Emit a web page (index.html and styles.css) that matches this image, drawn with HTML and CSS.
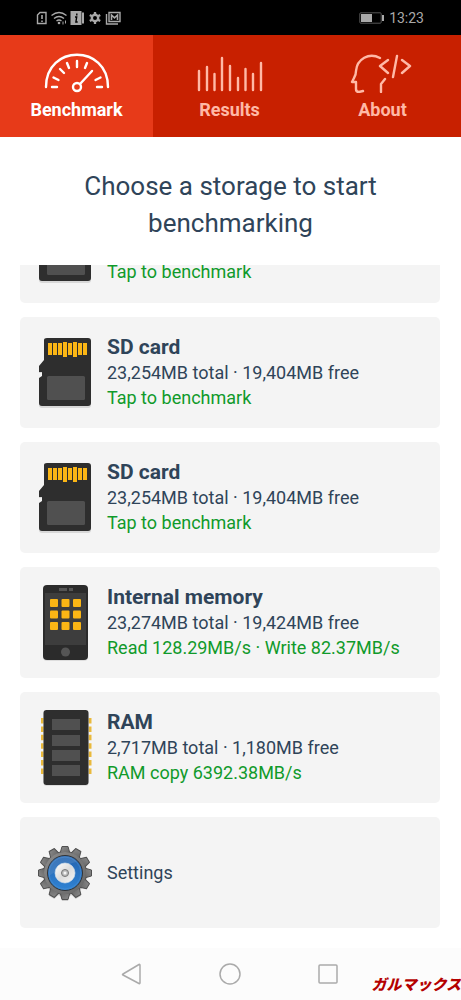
FILE: index.html
```html
<!DOCTYPE html>
<html lang="en">
<head>
<meta charset="utf-8">
<meta name="viewport" content="width=device-width, initial-scale=1">
<title>Storage benchmark</title>
<link rel="stylesheet" href="styles.css">
</head>
<body>
<svg width="0" height="0" class="defs" aria-hidden="true">
  <defs>
    <linearGradient id="metal" x1="0" y1="0" x2="1" y2="1"><stop offset="0" stop-color="#8c8c8c"/><stop offset="1" stop-color="#666"/></linearGradient>
    <linearGradient id="blue" x1="0" y1="0" x2="0" y2="1"><stop offset="0" stop-color="#2563ae"/><stop offset="1" stop-color="#2f83d4"/></linearGradient>
    <linearGradient id="silver" x1="0" y1="0" x2="1" y2="1"><stop offset="0" stop-color="#fff"/><stop offset=".5" stop-color="#dcdcdc"/><stop offset="1" stop-color="#f5f5f5"/></linearGradient>
    <path id="tooth" d="M-4.800 -20L-3 -26.500H3L4.800 -20Z"/>
    <symbol id="sd" viewBox="0 0 54 72">
      <path d="M9 1H50Q53 1 53 4V67Q53 70 50 70H4Q1 70 1 67V42L4 39V35H1V29L7 23V4Q7 1 9 1Z" fill="#d8d8d8" transform="translate(0 1)"/>
      <path d="M9 1H50Q53 1 53 4V66Q53 69 50 69H4Q1 69 1 66V41L4 39V35H1V29L6 23V3Q6 1 9 1Z" fill="#2e2e2e"/>
      <path d="M10 6h4v12h-4zM15 6h4v12h-4zM20 6h4v12h-4zM25 5h4v15h-4zM30 6h4v12h-4zM35 5h4v15h-4zM40 6h4v12h-4zM45 6h4v12h-4z" fill="#fbb615"/>
      <rect x="9" y="39" width="38" height="24" rx="1.500" fill="#505050"/>
    </symbol>
  </defs>
</svg>
<div class="app">
  <header class="status">
    <div class="status-icons">
      <svg width="86" height="16" viewBox="0 0 86 16" fill="none" stroke="#a9a9a9" stroke-width="1.400" aria-hidden="true">
        <path d="M4 2.500H10V13.500H1.500V5Z"/><path d="M6 5v4M6 10.500v1.500" stroke-width="1.600"/>
        <path d="M15.500 5.500Q23 -.5 30.500 5.500M18 8.500Q23 4.500 28 8.500M20.500 11Q23 9 25.500 11"/><circle cx="23" cy="13" r="1.300" fill="#a9a9a9" stroke="none"/><path d="M27 11.500v3M29.500 10.500v3" stroke-width="1"/>
        <path d="M34.500 1h11v14h-11zM46 2.500h2v11h-2z" fill="#a9a9a9" stroke="none"/><path d="M40.800 3.500v2M39 7h1.700l-.8 5h1.800" stroke="#000"/>
        <circle cx="59" cy="8" r="3.200" stroke-width="2.400"/><path d="M59 2v2.500M59 11.500V14M53.800 5l2.200 1.300M62 9.700l2.200 1.300M53.800 11l2.200-1.300M62 6.300L64.200 5" stroke-width="2.300"/>
        <path d="M73 2.500H84V11.500H73ZM70.500 4V14H82"/><path d="M75.500 10V5l3 2.800 3-2.800v5" stroke-width="1.600"/>
      </svg>
    </div>
    <div class="status-right">
      <svg width="26" height="12" viewBox="0 0 26 12" aria-hidden="true"><rect x=".8" y=".8" width="21.400" height="10.400" rx="1" fill="none" stroke="#555"/><path d="M2 2h11v8H2zM23 3h2v6h-2z" fill="#aaa"/></svg>
      <time>13:23</time>
    </div>
  </header>
  <nav class="tabs">
    <button class="tab tab-active" type="button">
      <svg class="tab-icon" viewBox="0 0 66 40" aria-hidden="true"><path d="M2 34C2 -9 64 -9 64 34M8 34h5M53 34h5M9.500 24.500l5 2.500M16 16l4 4M23 10l2 5M33 8v6M43 10l-2 5M56.500 24.500l-5 2.500M36 31L48 18"/><circle cx="33" cy="34" r="4"/></svg>
      Benchmark
    </button>
    <button class="tab" type="button">
      <svg class="tab-icon" viewBox="0 0 66 40" aria-hidden="true"><path d="M2 18V37M10 14V37M17.500 21V37M25 5V37M33 13V37M41 25V37M48.500 16V37M56 21V37M64 10V37"/></svg>
      Results
    </button>
    <button class="tab" type="button">
      <svg class="tab-icon" viewBox="0 0 66 40" aria-hidden="true"><path d="M30 5C19 -1 7 6 6 18Q6 22 4 25L2 29H6V36Q6 39 9 39L13 38M35 26L31 31V39M38 7L30 13L38 20M47 3L43 24M52 7L60 13L52 20"/></svg>
      About
    </button>
  </nav>
  <h1 class="title">Choose a storage to start benchmarking</h1>
  <main class="list">
    <button class="card card-clipped" type="button">
      <svg class="card-icon" viewBox="0 0 54 72" aria-hidden="true"><use href="#sd"/></svg>
      <span class="info"><span class="result">Tap to benchmark</span></span>
    </button>
    <button class="card" type="button">
      <svg class="card-icon" viewBox="0 0 54 72" aria-hidden="true"><use href="#sd"/></svg>
      <span class="info"><strong class="name">SD card</strong><span>23,254MB total · 19,404MB free</span><span class="result">Tap to benchmark</span></span>
    </button>
    <button class="card" type="button">
      <svg class="card-icon" viewBox="0 0 54 72" aria-hidden="true"><use href="#sd"/></svg>
      <span class="info"><strong class="name">SD card</strong><span>23,254MB total · 19,404MB free</span><span class="result">Tap to benchmark</span></span>
    </button>
    <button class="card" type="button">
      <svg class="card-icon" viewBox="0 0 54 77" aria-hidden="true">
        <rect x="5" y="2" width="45" height="75" rx="4" fill="#ddd"/>
        <rect x="5" y="1" width="45" height="75" rx="4" fill="#2b2b2b"/>
        <path d="M7 9H48V61H7Z" fill="#3d3d3d"/><path d="M21 4h8v3h-8zM31 4h4v3h-4z" fill="#555"/>
        <circle cx="27.500" cy="68" r="4.500" fill="#555"/>
        <g fill="#fbb615"><rect x="12" y="15" width="8" height="8" rx="1"/><rect x="23.500" y="15" width="8" height="8" rx="1"/><rect x="35" y="15" width="8" height="8" rx="1"/><rect x="12" y="26.500" width="8" height="8" rx="1"/><rect x="23.500" y="26.500" width="8" height="8" rx="1"/><rect x="35" y="26.500" width="8" height="8" rx="1"/><rect x="12" y="38" width="8" height="8" rx="1"/><rect x="23.500" y="38" width="8" height="8" rx="1"/><rect x="35" y="38" width="8" height="8" rx="1"/></g>
      </svg>
      <span class="info"><strong class="name">Internal memory</strong><span>23,274MB total · 19,424MB free</span><span class="result">Read 128.29MB/s · Write 82.37MB/s</span></span>
    </button>
    <button class="card" type="button">
      <svg class="card-icon" viewBox="0 0 54 77" aria-hidden="true">
        <path d="M4.500 9V65M52 9V65" stroke="#e9b93c" stroke-width="3" stroke-dasharray="5.500 2.900"/>
        <rect x="5.500" y="2" width="45" height="75" rx="3" fill="#ddd"/>
        <rect x="5.500" y="1" width="45" height="75" rx="3" fill="#2e2e2e"/>
        <path d="M14 10h28v11H14zM14 26h28v11H14zM14 41h28v11H14zM14 56h28v11H14z" fill="#505050"/>
      </svg>
      <span class="info"><strong class="name">RAM</strong><span>2,717MB total · 1,180MB free</span><span class="result">RAM copy 6392.38MB/s</span></span>
    </button>
    <button class="card" type="button">
      <svg class="card-icon" viewBox="-27 -28 54 56" aria-hidden="true">
        <g fill="#ccc" transform="translate(0 1.500)"><circle r="22"/><use href="#tooth" transform="rotate(180)"/><use href="#tooth" transform="rotate(150)"/><use href="#tooth" transform="rotate(210)"/></g>
        <g fill="url(#metal)" stroke="#505050" stroke-width="1" stroke-linejoin="round">
          <circle r="21.500"/>
          <use href="#tooth"/><use href="#tooth" transform="rotate(30)"/><use href="#tooth" transform="rotate(60)"/><use href="#tooth" transform="rotate(90)"/><use href="#tooth" transform="rotate(120)"/><use href="#tooth" transform="rotate(150)"/><use href="#tooth" transform="rotate(180)"/><use href="#tooth" transform="rotate(210)"/><use href="#tooth" transform="rotate(240)"/><use href="#tooth" transform="rotate(270)"/><use href="#tooth" transform="rotate(300)"/><use href="#tooth" transform="rotate(330)"/>
        </g>
        <circle r="21" fill="url(#metal)"/>
        <circle r="17.500" fill="url(#blue)" stroke="#333"/>
        <circle r="16" fill="none" stroke="#4a8fd2" stroke-width=".6"/>
        <path d="M-16 3A16 16 0 0 1 12 -11Q2 -10 -16 3Z" fill="#5f92c9" opacity=".4"/>
        <circle r="10" fill="url(#silver)" stroke="#d8e4ef" stroke-width=".6"/>
        <circle r="3.500" fill="#bbb" stroke="#777" stroke-width="1"/><circle r="1.500" fill="#f4f4f4"/>
      </svg>
      <span class="info">Settings</span>
    </button>
  </main>
  <footer class="navbar">
    <button class="nav-button" type="button" aria-label="Back"><svg viewBox="0 0 22 22"><path d="M2 11L18 1.500Q19 1 19 2.500V19.500Q19 21 18 20.500L2 12Q1 11.500 2 11Z"/></svg></button>
    <button class="nav-button" type="button" aria-label="Home"><svg viewBox="0 0 22 22"><circle cx="11" cy="11" r="10"/></svg></button>
    <button class="nav-button" type="button" aria-label="Recent apps"><svg viewBox="0 0 22 22"><rect x="2" y="2" width="18" height="18" rx="1"/></svg></button>
  </footer>
  <span class="watermark" lang="ja">ガルマックス</span>
</div>
</body>
</html>
```
FILE: styles.css
```css
* { box-sizing: border-box; }

body {
  margin: 0;
  background: #fff;
  color: #2f4459;
  font-family: Roboto, "Liberation Sans", sans-serif;
}

button {
  margin: 0;
  padding: 0;
  border: 0;
  background: none;
  color: inherit;
  font: inherit;
  cursor: pointer;
}

.defs { position: absolute; }

.app {
  position: relative;
  display: flex;
  flex-direction: column;
  height: 100vh;
}

.status {
  display: flex;
  align-items: center;
  justify-content: space-between;
  height: 35px;
  padding: 0 37px 0 36px;
  background: #000;
  color: #a9a9a9;
  font-size: 14px;
}

.status-icons,
.status-right {
  display: flex;
  align-items: center;
  gap: 4px;
}

.tabs {
  display: grid;
  grid-template-columns: repeat(3, 1fr);
  height: 102px;
  padding-right: 2px;
  background: #c82000;
}

.tab {
  display: flex;
  flex-direction: column;
  align-items: center;
  padding-top: 18px;
  color: #ffb9a6;
  font-size: 18px;
  font-weight: 700;
  line-height: 24px;
}

.tab-active {
  background: #e73a19;
  color: #fff;
}

.tab-icon {
  width: 66px;
  height: 40px;
  margin-bottom: 5px;
  fill: none;
  stroke: currentColor;
  stroke-width: 2.4;
  stroke-linecap: round;
  stroke-linejoin: round;
}

.title {
  margin: 0;
  padding: 31px 64px 23px;
  font-size: 26px;
  font-weight: 400;
  line-height: 37px;
  text-align: center;
}

.list {
  display: flex;
  flex: 1;
  flex-direction: column;
  justify-content: flex-end;
  gap: 14px;
  min-height: 0;
  padding: 0 21px 20px 20px;
  overflow: hidden;
}

.card {
  display: flex;
  flex: none;
  align-items: center;
  gap: 15px;
  min-height: 111px;
  padding: 0 18px;
  border-radius: 5px;
  background: #f4f4f4;
  font-size: 18px;
  line-height: 25px;
  text-align: left;
}

.card-clipped {
  align-items: flex-end;
  padding-bottom: 19px;
}

.card-icon {
  flex: none;
  width: 54px;
}

.info {
  display: flex;
  flex-direction: column;
}

.name {
  font-size: 21px;
  font-weight: 700;
}

.result { color: #109a2a; }

.navbar {
  display: flex;
  align-items: center;
  justify-content: center;
  gap: 76px;
  height: 52px;
  padding-right: 2px;
  background: #fcfcfc;
}

.nav-button {
  display: flex;
  width: 22px;
}

.nav-button svg {
  width: 22px;
  height: 22px;
  fill: none;
  stroke: #aaa;
  stroke-width: 1.5;
}

.watermark {
  position: absolute;
  right: 0;
  bottom: 6px;
  color: #b40000;
  font-family: "Noto Sans CJK JP", sans-serif;
  font-size: 15px;
  font-style: italic;
  font-weight: 900;
  line-height: 20px;
}
```
